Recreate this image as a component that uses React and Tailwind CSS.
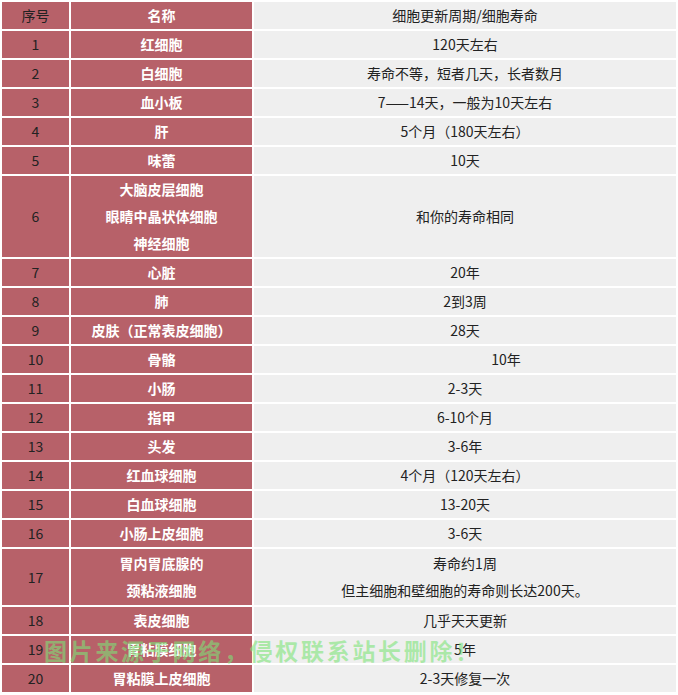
import React from 'react';

const rows = [
  { no: '1', name: ['红细胞'], life: ['120天左右'] },
  { no: '2', name: ['白细胞'], life: ['寿命不等，短者几天，长者数月'] },
  { no: '3', name: ['血小板'], life: ['7——14天，一般为10天左右'] },
  { no: '4', name: ['肝'], life: ['5个月（180天左右）'] },
  { no: '5', name: ['味蕾'], life: ['10天'] },
  { no: '6', name: ['大脑皮层细胞', '眼睛中晶状体细胞', '神经细胞'], life: ['和你的寿命相同'] },
  { no: '7', name: ['心脏'], life: ['20年'] },
  { no: '8', name: ['肺'], life: ['2到3周'] },
  { no: '9', name: ['皮肤（正常表皮细胞）'], life: ['28天'] },
  { no: '10', name: ['骨骼'], life: ['10年'], shift: true },
  { no: '11', name: ['小肠'], life: ['2-3天'] },
  { no: '12', name: ['指甲'], life: ['6-10个月'] },
  { no: '13', name: ['头发'], life: ['3-6年'] },
  { no: '14', name: ['红血球细胞'], life: ['4个月（120天左右）'] },
  { no: '15', name: ['白血球细胞'], life: ['13-20天'] },
  { no: '16', name: ['小肠上皮细胞'], life: ['3-6天'] },
  { no: '17', name: ['胃内胃底腺的', '颈粘液细胞'], life: ['寿命约1周', '但主细胞和壁细胞的寿命则长达200天。'] },
  { no: '18', name: ['表皮细胞'], life: ['几乎天天更新'] },
  { no: '19', name: ['胃粘膜细胞'], life: ['5年'] },
  { no: '20', name: ['胃粘膜上皮细胞'], life: ['2-3天修复一次'] },
];

export default function App() {
  return (
    <div
      className="relative w-[678px] bg-white text-[14px] text-[#222]"
      style={{ fontFamily: '"Noto Sans CJK SC", "Noto Sans", sans-serif' }}
    >
      <table className="w-[678px] table-fixed border-separate border-spacing-[2px]">
        <colgroup>
          <col className="w-[67px]" />
          <col className="w-[181px]" />
          <col className="w-[422px]" />
        </colgroup>
        <thead>
          <tr>
            <th className="bg-[#b76169] p-0 text-center font-normal leading-[27px]">序号</th>
            <th className="bg-[#b76169] p-0 text-center font-bold leading-[27px] text-white">名称</th>
            <th className="bg-[#efefef] p-0 text-center font-normal leading-[27px]">细胞更新周期/细胞寿命</th>
          </tr>
        </thead>
        <tbody>
          {rows.map((r) => (
            <tr key={r.no}>
              <td className="bg-[#b76169] p-0 text-center leading-[27px]">{r.no}</td>
              <td className={`bg-[#b76169] p-0 text-center font-bold leading-[27px] text-white ${r.no === '17' ? 'py-px' : ''}`}>
                {r.name.map((n) => (
                  <div key={n}>{n}</div>
                ))}
              </td>
              <td className={`bg-[#efefef] p-0 text-center leading-[27px] ${r.shift ? 'pl-[82px]' : ''}`}>
                {r.life.map((l) => (
                  <div key={l}>{l}</div>
                ))}
              </td>
            </tr>
          ))}
        </tbody>
      </table>
      <div className="pointer-events-none absolute left-[44px] top-[636px] whitespace-nowrap text-[23px] font-bold leading-[28px] tracking-[2.7px] text-[rgba(125,228,120,0.6)]">
        图片来源于网络，侵权联系站长删除！
      </div>
    </div>
  );
}
